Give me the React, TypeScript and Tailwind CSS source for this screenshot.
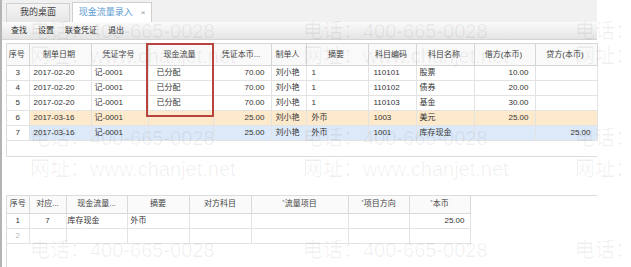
import React from 'react';

type Row = {
  no: number;
  date: string;
  voucher: string;
  flow: string;
  amount: string;
  maker: string;
  memo: string;
  code: string;
  name: string;
  debit: string;
  credit: string;
  tone?: 'orange' | 'blue';
};

const rows: Row[] = [
  { no: 3, date: '2017-02-20', voucher: '记-0001', flow: '已分配', amount: '70.00', maker: '刘小艳', memo: '1', code: '110101', name: '股票', debit: '10.00', credit: '' },
  { no: 4, date: '2017-02-20', voucher: '记-0001', flow: '已分配', amount: '70.00', maker: '刘小艳', memo: '1', code: '110102', name: '债券', debit: '20.00', credit: '' },
  { no: 5, date: '2017-02-20', voucher: '记-0001', flow: '已分配', amount: '70.00', maker: '刘小艳', memo: '1', code: '110103', name: '基金', debit: '30.00', credit: '' },
  { no: 6, date: '2017-03-16', voucher: '记-0001', flow: '', amount: '25.00', maker: '刘小艳', memo: '外币', code: '1003', name: '美元', debit: '25.00', credit: '', tone: 'orange' },
  { no: 7, date: '2017-03-16', voucher: '记-0001', flow: '', amount: '25.00', maker: '刘小艳', memo: '外币', code: '1001', name: '库存现金', debit: '', credit: '25.00', tone: 'blue' },
];

const mainCols = [22, 62, 57, 65, 58, 35, 62, 48, 58, 61, 62];
const mainHeads = ['序号', '制单日期', '凭证字号', '现金流量', '凭证本币...', '制单人', '摘要', '科目编码', '科目名称', '借方(本币)', '贷方(本币)'];

const subCols = [22, 37, 61, 62, 62, 97, 61, 61];

const Star = () => <span className="text-[6px] text-[#777] align-top">*</span>;

const Watermark = () => {
  const xs = [30, 303, 575];
  const phone = [21, 128, 240];
  const site = [46, 159];
  return (
    <div className="pointer-events-none absolute inset-0 overflow-hidden text-[20px] leading-none text-black/[0.06] whitespace-nowrap">
      {xs.map((x) => (
        <React.Fragment key={x}>
          {phone.map((y) => (
            <div key={'p' + y} className="absolute" style={{ left: x, top: y }}>电话：400-665-0028</div>
          ))}
          {site.map((y) => (
            <div key={'s' + y} className="absolute" style={{ left: x, top: y }}>网址：www.chanjet.net</div>
          ))}
        </React.Fragment>
      ))}
    </div>
  );
};

const App = () => {
  const td = 'border-r border-b border-[#e3e3e3] h-[15px] p-0 whitespace-nowrap overflow-hidden';
  const rowBg = (r: Row) => (r.tone === 'orange' ? 'bg-[#fde9cb]' : r.tone === 'blue' ? 'bg-[#dce9f8]' : '');

  return (
    <div
      className="relative w-[631px] h-[267px] bg-white overflow-hidden text-[8px] text-[#333]"
      style={{ fontFamily: '"Liberation Sans", "Noto Sans CJK SC", sans-serif' }}
    >
      <div className="relative w-[597px] h-full flex flex-col border-l-2 border-[#b4b4b4]">
        {/* tabs */}
        <div className="h-[22px] bg-[#f1f1f1] flex items-end gap-[2px] pl-[4px]">
          <div className="w-[64px] h-[19px] flex items-center justify-center border border-b-0 border-[#cfcfcf] bg-gradient-to-b from-[#f4f4f4] to-[#e6e6e6] text-[9px] text-[#444]">
            我的桌面
          </div>
          <div className="w-[80px] h-[20px] flex items-center justify-center gap-[8px] border border-b-0 border-[#cfcfcf] bg-white text-[9px] text-[#5b9bd0]">
            <span>现金流量录入</span>
            <span className="text-[#9a9a9a] text-[8px]">×</span>
          </div>
        </div>

        {/* toolbar */}
        <div className="h-[18px] flex items-center gap-[11px] pl-[9px] bg-gradient-to-b from-[#fbfbfb] to-[#e4e4e4] border-b border-[#d4d4d4]">
          <span>查找</span>
          <span>设置</span>
          <span>联查凭证</span>
          <span>退出</span>
        </div>

        {/* main grid */}
        <div className="mt-[3px] ml-[4px] w-[591px] h-[114px] border-l border-b border-[#dcdcdc]">
          <table className="table-fixed border-collapse w-[590px]">
            <colgroup>
              {mainCols.map((w, i) => (
                <col key={i} style={{ width: w }} />
              ))}
            </colgroup>
            <thead>
              <tr className="bg-[#f9f9f9]">
                {mainHeads.map((h) => (
                  <th key={h} className="h-[22px] p-0 pr-[2px] border-t border-r border-b border-[#d6d6d6] font-normal text-center text-[#444] whitespace-nowrap overflow-hidden">
                    {h}
                  </th>
                ))}
              </tr>
            </thead>
            <tbody>
              {rows.map((r) => (
                <tr key={r.no}>
                  <td className={td + ' text-center'}>{r.no}</td>
                  <td className={td + ' pl-[4px] ' + rowBg(r)}>{r.date}</td>
                  <td className={td + ' pl-[3px] ' + rowBg(r)}>{r.voucher}</td>
                  <td className={td + ' pl-[8px] ' + rowBg(r)}>{r.flow}</td>
                  <td className={td + ' pr-[6px] text-right ' + rowBg(r)}>{r.amount}</td>
                  <td className={td + ' pl-[4px] ' + rowBg(r)}>{r.maker}</td>
                  <td className={td + ' pl-[5px] ' + rowBg(r)}>{r.memo}</td>
                  <td className={td + ' pl-[5px] ' + rowBg(r)}>{r.code}</td>
                  <td className={td + ' pl-[3px] ' + rowBg(r)}>{r.name}</td>
                  <td className={td + ' pr-[6px] text-right ' + rowBg(r)}>{r.debit}</td>
                  <td className={td + ' pr-[6px] text-right ' + rowBg(r)}>{r.credit}</td>
                </tr>
              ))}
            </tbody>
          </table>
        </div>

        {/* detail grid */}
        <div className="mt-[38px] ml-[4px] flex-1 border-l border-t border-[#dcdcdc]">
          <table className="table-fixed border-collapse w-[463px]">
            <colgroup>
              {subCols.map((w, i) => (
                <col key={i} style={{ width: w }} />
              ))}
            </colgroup>
            <thead>
              <tr className="bg-[#fafafa]">
                <th className="h-[17px] p-0 border-r border-b border-[#d9d9d9] font-normal text-[#444]">序号</th>
                <th className="h-[17px] p-0 border-r border-b border-[#d9d9d9] font-normal text-[#444]">对应...</th>
                <th className="h-[17px] p-0 border-r border-b border-[#d9d9d9] font-normal text-[#444]">现金流量...</th>
                <th className="h-[17px] p-0 border-r border-b border-[#d9d9d9] font-normal text-[#444]">摘要</th>
                <th className="h-[17px] p-0 border-r border-b border-[#d9d9d9] font-normal text-[#444]">对方科目</th>
                <th className="h-[17px] p-0 border-r border-b border-[#d9d9d9] font-normal text-[#444]"><Star />流量项目</th>
                <th className="h-[17px] p-0 border-r border-b border-[#d9d9d9] font-normal text-[#444]"><Star />项目方向</th>
                <th className="h-[17px] p-0 border-r border-b border-[#d9d9d9] font-normal text-[#444]"><Star />本币</th>
              </tr>
            </thead>
            <tbody>
              <tr>
                <td className={td + ' text-center'}>1</td>
                <td className={td + ' text-center'}>7</td>
                <td className={td + ' pl-[1px]'}>库存现金</td>
                <td className={td + ' pl-[3px]'}>外币</td>
                <td className={td}></td>
                <td className={td}></td>
                <td className={td}></td>
                <td className={td + ' pr-[5px] text-right'}>25.00</td>
              </tr>
              <tr>
                <td className={td + ' text-center text-[#bbb]'}>2</td>
                <td className={td}></td>
                <td className={td}></td>
                <td className={td}></td>
                <td className={td}></td>
                <td className={td}></td>
                <td className={td}></td>
                <td className={td}></td>
              </tr>
            </tbody>
          </table>
        </div>

        {/* annotation box */}
        <div className="pointer-events-none absolute left-[144px] top-[43px] w-[68px] h-[74px] border-2 border-[#b8433f]" />
      </div>

      <Watermark />
    </div>
  );
};

export default App;
